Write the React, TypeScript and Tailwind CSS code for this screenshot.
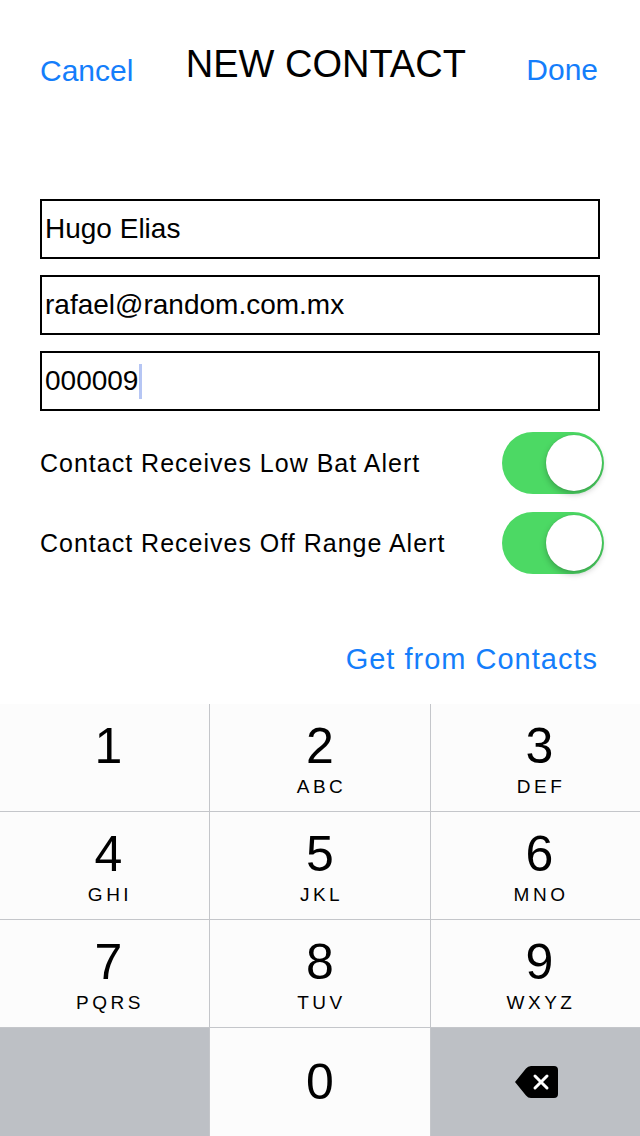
import React from "react";

const keys = [
  { d: "1", l: "", side: true },
  { d: "2", l: "ABC", side: false },
  { d: "3", l: "DEF", side: true },
  { d: "4", l: "GHI", side: true },
  { d: "5", l: "JKL", side: false },
  { d: "6", l: "MNO", side: true },
  { d: "7", l: "PQRS", side: true },
  { d: "8", l: "TUV", side: false },
  { d: "9", l: "WXYZ", side: true },
];

function Toggle() {
  return (
    <div className="relative h-[62px] w-[102px] rounded-full bg-[#4cd964]">
      <div className="absolute right-[2px] top-[3px] h-[56px] w-[56px] rounded-full bg-white shadow-[0_3px_6px_rgba(0,0,0,0.25),0_0_1px_rgba(0,0,0,0.2)]" />
    </div>
  );
}

function Field({ children }: { children: React.ReactNode }) {
  return (
    <div className="flex h-[60px] items-center border-2 border-black px-[3px] text-[28px] leading-none text-black">
      {children}
    </div>
  );
}

function Key({ d, l, side }: { d: string; l: string; side: boolean }) {
  return (
    <div className={side ? "flex flex-col items-center bg-[#fcfcfc] pl-[8px]" : "flex flex-col items-center bg-[#fcfcfc]"}>
      <span className="mt-[17px] text-[50px] leading-none text-black">{d}</span>
      {l && (
        <span className="mt-[6px] pl-[3px] text-[19px] leading-none tracking-[3.5px] text-black">
          {l}
        </span>
      )}
    </div>
  );
}

export default function App() {
  return (
    <div className="flex h-[1136px] w-[640px] flex-col overflow-hidden bg-white font-['Liberation_Sans',Arial,sans-serif]">
      {/* Header */}
      <div className="flex items-start justify-between pl-[40px] pr-[42px] pt-[45px]">
        <span className="mt-[11px] text-[30px] leading-none text-[#147efb]">Cancel</span>
        <span className="mr-[8px] text-[38px] leading-none text-black">NEW CONTACT</span>
        <span className="mt-[10px] text-[30px] leading-none text-[#147efb]">Done</span>
      </div>

      {/* Form */}
      <div className="mt-[113px] flex flex-col gap-4 px-10">
        <Field>Hugo Elias</Field>
        <Field>rafael@random.com.mx</Field>
        <Field>
          000009
          <span className="ml-[1px] inline-block h-[35px] w-[3px] bg-[#b6c6f4]" />
        </Field>
      </div>

      <div className="mt-[21px] flex flex-col gap-[18px] pl-10 pr-9">
        <div className="flex h-[62px] items-center justify-between">
          <span className="text-[25px] leading-none tracking-[1px] text-black">
            Contact Receives Low Bat Alert
          </span>
          <Toggle />
        </div>
        <div className="flex h-[62px] items-center justify-between">
          <span className="text-[25px] leading-none tracking-[1px] text-black">
            Contact Receives Off Range Alert
          </span>
          <Toggle />
        </div>
      </div>

      <div className="mt-[71px] flex justify-end pr-[42px]">
        <span className="text-[29px] leading-none tracking-[1px] text-[#147efb]">
          Get from Contacts
        </span>
      </div>

      {/* Keypad */}
      <div className="mt-auto grid h-[432px] grid-cols-[209px_220px_209px] grid-rows-[107px_107px_107px_108px] gap-px bg-[#c4c6ca]">
        {keys.map((k) => (
          <Key key={k.d} d={k.d} l={k.l} side={k.side} />
        ))}
        <div className="bg-[#bdc0c5]" />
        <div className="flex items-center justify-center bg-[#fcfcfc]">
          <span className="text-[50px] leading-none text-black">0</span>
        </div>
        <div className="flex items-center justify-center bg-[#bdc0c5]">
          <svg width="44" height="32" viewBox="0 0 44 32">
            <path
              d="M1 16 L12 2.5 Q14 0 17 0 H40 Q44 0 44 4 V28 Q44 32 40 32 H17 Q14 32 12 29.5 Z"
              fill="#000"
            />
            <path d="M21 10 L33 22 M33 10 L21 22" stroke="#fff" strokeWidth="3" strokeLinecap="round" />
          </svg>
        </div>
      </div>
    </div>
  );
}
